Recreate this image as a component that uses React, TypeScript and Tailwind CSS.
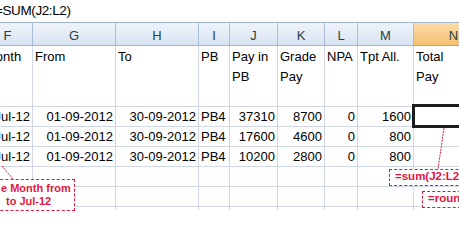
import React from "react";

const cols = ["F", "G", "H", "I", "J", "K", "L", "M", "N"];
const widths = ["w-[50px]", "w-[83px]", "w-[83px]", "w-[31px]", "w-[48px]", "w-[47px]", "w-[33px]", "w-[56px]", "w-[80px]"];

const labels: string[][] = [
  ["Month"],
  ["From"],
  ["To"],
  ["PB"],
  ["Pay in", "PB"],
  ["Grade", "Pay"],
  ["NPA"],
  ["Tpt All."],
  ["Total", "Pay"],
];

type Cell = { t: string; a: "l" | "r" };
const mk = (pay: string, grade: string, tpt: string): Cell[] => [
  { t: "Jul-12", a: "r" },
  { t: "01-09-2012", a: "r" },
  { t: "30-09-2012", a: "r" },
  { t: "PB4", a: "l" },
  { t: pay, a: "r" },
  { t: grade, a: "r" },
  { t: "0", a: "r" },
  { t: tpt, a: "r" },
  { t: "", a: "r" },
];
const data: Cell[][] = [mk("37310", "8700", "1600"), mk("17600", "4600", "800"), mk("10200", "2800", "800")];

const empty: Cell[] = cols.map(() => ({ t: "", a: "r" as const }));

export default function App() {
  const font = { fontFamily: '"Liberation Sans", Arial, sans-serif' };
  return (
    <div
      className="relative w-[459px] h-[241px] overflow-hidden bg-white text-black"
      style={font}
    >
      {/* formula bar */}
      <div className="h-[23px] border-b border-[#a3b6d1] bg-white flex items-start">
        <span className="ml-[-5px] mt-[3px] text-[13.5px] leading-[16px] tracking-[-0.4px] whitespace-nowrap">
          =SUM(J2:L2)
        </span>
      </div>

      {/* sheet */}
      <div className="ml-[-17px] h-[187px] overflow-hidden">
        {/* column headers */}
        <div className="flex h-[23px]">
          {cols.map((c, i) => (
            <div
              key={c}
              className={`${widths[i]} shrink-0 h-[23px] border-r border-b flex justify-center pt-[3px] text-[13px] leading-[19px] text-[#27413e] ${
                c === "N"
                  ? "bg-gradient-to-b from-[#fbdcaa] to-[#f6c070] border-r-[#e3b46a] border-b-[#c9a060]"
                  : "bg-gradient-to-b from-[#eef3fa] to-[#d9e4f2] border-r-[#a9bdd6] border-b-[#9eb6ce]"
              }`}
            >
              {c}
            </div>
          ))}
        </div>

        {/* label row */}
        <div className="flex h-[61px]">
          {labels.map((l, i) => (
            <div
              key={i}
              className={`${widths[i]} shrink-0 h-[61px] border-r border-b border-[#d0d7e5] pl-[2px] pt-[1px] text-[13px] leading-[20px] whitespace-nowrap`}
            >
              {l.map((s, j) => (
                <div key={j}>{s}</div>
              ))}
            </div>
          ))}
        </div>

        {/* data rows */}
        {[...data, empty, empty, empty].map((row, r) => (
          <div key={r} className="flex h-[20px]">
            {row.map((c, i) => (
              <div
                key={i}
                className={`${widths[i]} shrink-0 h-[20px] border-r border-b border-[#d0d7e5] text-[13px] leading-[19px] whitespace-nowrap ${
                  c.a === "r" ? "text-right pr-[2px]" : "text-left pl-[2px]"
                }`}
              >
                {c.t}
              </div>
            ))}
          </div>
        ))}
      </div>

      {/* selection box */}
      <div className="absolute left-[412px] top-[104px] w-[70px] h-[24px] border-[3px] border-[#1c1c1c]" />

      {/* leader lines */}
      <svg className="absolute left-0 top-0" width="459" height="241">
        <line x1="2" y1="166" x2="13" y2="179" stroke="#e3173e" strokeWidth="1" strokeDasharray="2 1" />
        <line x1="444" y1="128" x2="438" y2="169" stroke="#e3173e" strokeWidth="1" strokeDasharray="2 1" />
      </svg>

      {/* annotation: month */}
      <div className="absolute left-[-10px] top-[179px] w-[85px] h-[32px] border border-dashed border-[#e3173e] bg-white text-[11px] leading-[13px] font-bold text-[#e3173e] whitespace-nowrap pt-[2px]">
        <div className="pl-[10px]">e Month from</div>
        <div className="pl-[15px]">to Jul-12</div>
      </div>

      {/* annotation: sum */}
      <div className="absolute left-[389px] top-[169px] w-[90px] h-[17px] border border-dashed border-[#e3173e] bg-white text-[11.5px] leading-[13px] font-bold text-[#e3173e] whitespace-nowrap pl-[5px]">
        =sum(J2:L2)
      </div>

      {/* annotation: round */}
      <div className="absolute left-[422px] top-[191px] w-[90px] h-[17px] border border-dashed border-[#e3173e] bg-white text-[11.5px] leading-[13px] font-bold text-[#e3173e] whitespace-nowrap pl-[5px]">
        =round(
      </div>
    </div>
  );
}
